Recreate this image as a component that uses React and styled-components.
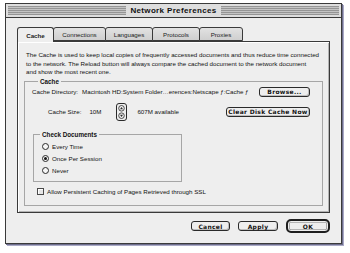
import React from 'react';
import styled, { createGlobalStyle } from 'styled-components';

const GlobalStyle = createGlobalStyle`
  html, body {
    margin: 0;
    padding: 0;
    background: #ffffff;
  }
  body {
    font-family: "Liberation Sans", Arial, sans-serif;
    color: #111;
  }
`;

const Desktop = styled.div`
  width: 350px;
  height: 253px;
  padding: 3px 0 0 5px;
  box-sizing: border-box;
`;

const Window = styled.div`
  width: 337px;
  height: 241px;
  box-sizing: border-box;
  border: 1px solid #3a3a3a;
  background: #eeeeee;
  box-shadow: 1px 1px 0 #6e6e8c, 2px 2px 0 #a9a9c6;
  display: flex;
  flex-direction: column;
`;

const TitleBar = styled.div`
  flex: none;
  height: 13px;
  display: flex;
  align-items: center;
  gap: 4px;
  padding: 0 2px;
  background: #dedede;
  border-bottom: 1px solid #3a3a3a;
`;

const Stripes = styled.div`
  flex: 1;
  height: 9px;
  background: repeating-linear-gradient(to bottom, #959595 0 1px, #c4c4c4 1px 2px);
`;

const Title = styled.div`
  font-weight: bold;
  font-size: 8px;
  letter-spacing: 0.35px;
  color: #111;
`;

const Body = styled.div`
  flex: 1;
  display: flex;
  flex-direction: column;
  padding: 9px 11px 0 11px;
`;

const TabRow = styled.div`
  display: flex;
  height: 14px;
  position: relative;
  z-index: 1;
`;

const Tab = styled.div`
  width: ${p => p.w}px;
  box-sizing: border-box;
  display: flex;
  align-items: center;
  justify-content: center;
  margin-right: -1px;
  border: 1px solid #3a3a3a;
  border-bottom: ${p => (p.active ? 'none' : '1px solid #3a3a3a')};
  border-radius: 3px 3px 0 0;
  background: ${p => (p.active ? '#eeeeee' : 'linear-gradient(#e2e2e2, #cfcfcf)')};
  font-size: 6.2px;
  font-weight: ${p => (p.active ? 'bold' : 'normal')};
  color: #222;
  height: ${p => (p.active ? '15px' : '14px')};
`;

const Panel = styled.div`
  height: 172px;
  box-sizing: border-box;
  border: 1px solid #3a3a3a;
  box-shadow: inset 1px 1px 0 #ffffff, inset -1px -1px 0 #b4b4b4;
  display: flex;
  flex-direction: column;
  padding: 9px 6px 6px 6px;
`;

const Intro = styled.p`
  margin: 0 0 0 2px;
  font-size: 6.2px;
  line-height: 8.5px;
  white-space: nowrap;
`;

const Group = styled.fieldset`
  margin: ${p => p.m || '0'};
  padding: ${p => p.pad || '0'};
  border: 1px solid #a6a6a6;
  min-width: 0;
  flex: ${p => (p.grow ? 1 : 'none')};
  width: ${p => (p.w ? `${p.w}px` : 'auto')};
  box-sizing: border-box;
  display: flex;
  flex-direction: column;
`;

const Legend = styled.legend`
  margin-left: 6px;
  padding: 0 2px;
  font-size: 6.3px;
  font-weight: bold;
  line-height: 8px;
`;

const Row = styled.div`
  display: flex;
  align-items: center;
  height: ${p => p.h}px;
  padding-left: ${p => p.indent || 0}px;
  gap: ${p => p.gap || 0}px;
  margin-top: ${p => p.mt || 0}px;
  font-size: 6.2px;
  white-space: nowrap;
`;

const Spacer = styled.div`
  flex: 1;
`;

const Label = styled.span`
  margin-left: ${p => p.ml || 0}px;
  margin-right: ${p => p.mr || 0}px;
`;

const MacButton = styled.button`
  width: ${p => p.w}px;
  height: ${p => p.h || 10}px;
  box-sizing: border-box;
  padding: 0;
  border: 1px solid #2a2a2a;
  border-radius: 3px;
  background: #eeeeee;
  box-shadow: inset -1px -1px 0 #bdbdbd;
  font-family: "DejaVu Sans", sans-serif;
  font-weight: bold;
  font-size: 6px;
  letter-spacing: 0.3px;
  color: #111;
  display: flex;
  align-items: center;
  justify-content: center;
`;

const DefaultButton = styled(MacButton)`
  height: 14px;
  border: 2px solid #1e1e1e;
  border-radius: 5px;
  box-shadow: inset 0 0 0 1px #eeeeee, inset 0 0 0 1.6px #7a7a7a;
`;

const RadioList = styled.div`
  display: flex;
  flex-direction: column;
  padding: 2px 0 4px 8px;
`;

const RadioRow = styled.div`
  display: flex;
  align-items: center;
  height: 12px;
  gap: 3px;
  font-size: 6.2px;
`;

const Radio = styled.span`
  width: 7px;
  height: 7px;
  box-sizing: border-box;
  border: 1px solid #2a2a2a;
  border-radius: 50%;
  background: #f6f6f6;
  display: flex;
  align-items: center;
  justify-content: center;
  &::after {
    content: '';
    width: 3px;
    height: 3px;
    border-radius: 50%;
    background: ${p => (p.on ? '#111' : 'transparent')};
  }
`;

const Check = styled.span`
  width: 7px;
  height: 7px;
  box-sizing: border-box;
  border: 1px solid #4a4a4a;
  background: #e6e6e6;
  box-shadow: inset 1px 1px 0 #ffffff;
`;

const ButtonBar = styled.div`
  display: flex;
  justify-content: flex-end;
  align-items: center;
  gap: 8px;
  height: 14px;
  padding: 6px 0 0 0;
`;

function Stepper() {
  return (
    <svg width="11" height="18" viewBox="0 0 11 18">
      <rect x="0.5" y="0.5" width="10" height="17" rx="2.5" fill="#eeeeee" stroke="#2a2a2a" />
      <circle cx="5.5" cy="5.3" r="2.8" fill="none" stroke="#2a2a2a" strokeWidth="0.8" />
      <path d="M5.5 3.9 L7 6.3 L4 6.3 Z" fill="#2a2a2a" />
      <circle cx="5.5" cy="12.7" r="2.8" fill="none" stroke="#2a2a2a" strokeWidth="0.8" />
      <path d="M5.5 14.1 L7 11.7 L4 11.7 Z" fill="#2a2a2a" />
    </svg>
  );
}

const tabs = [
  { name: 'Cache', w: 37 },
  { name: 'Connections', w: 53 },
  { name: 'Languages', w: 48 },
  { name: 'Protocols', w: 48 },
  { name: 'Proxies', w: 44 },
];

export default function App() {
  return (
    <Desktop>
      <GlobalStyle />
      <Window>
        <TitleBar>
          <Stripes />
          <Title>Network Preferences</Title>
          <Stripes />
        </TitleBar>
        <Body>
          <TabRow>
            {tabs.map(t => (
              <Tab key={t.name} w={t.w} active={t.name === 'Cache'}>
                {t.name}
              </Tab>
            ))}
          </TabRow>
          <Panel>
            <Intro>
              The Cache is used to keep local copies of frequently accessed documents and thus reduce time connected
              <br />
              to the network. The Reload button will always compare the cached document to the network document
              <br />
              and show the most recent one.
            </Intro>
            <Group grow m="1px 0 0 0" pad="0 12px 0 7px">
              <Legend>Cache</Legend>
              <Row h={12}>
                <Label mr={4}>Cache Directory:</Label>
                <span>Macintosh HD:System Folder…erences:Netscape ƒ:Cache ƒ</span>
                <Spacer />
                <MacButton w={51}>Browse...</MacButton>
              </Row>
              <Row h={18} indent={16} mt={5}>
                <Label mr={8}>Cache Size:</Label>
                <Label mr={15}>10M</Label>
                <Stepper />
                <Label ml={10}>607M available</Label>
                <Spacer />
                <MacButton w={84}>Clear Disk Cache Now</MacButton>
              </Row>
              <Group w={149} m="10px 0 0 1px" pad="0">
                <Legend>Check Documents</Legend>
                <RadioList>
                  <RadioRow>
                    <Radio />
                    Every Time
                  </RadioRow>
                  <RadioRow>
                    <Radio on />
                    Once Per Session
                  </RadioRow>
                  <RadioRow>
                    <Radio />
                    Never
                  </RadioRow>
                </RadioList>
              </Group>
              <Row h={12} indent={5} gap={3} mt={4}>
                <Check />
                Allow Persistent Caching of Pages Retrieved through SSL
              </Row>
            </Group>
          </Panel>
          <ButtonBar>
            <MacButton w={39}>Cancel</MacButton>
            <MacButton w={40}>Apply</MacButton>
            <DefaultButton w={44}>OK</DefaultButton>
          </ButtonBar>
        </Body>
      </Window>
    </Desktop>
  );
}
